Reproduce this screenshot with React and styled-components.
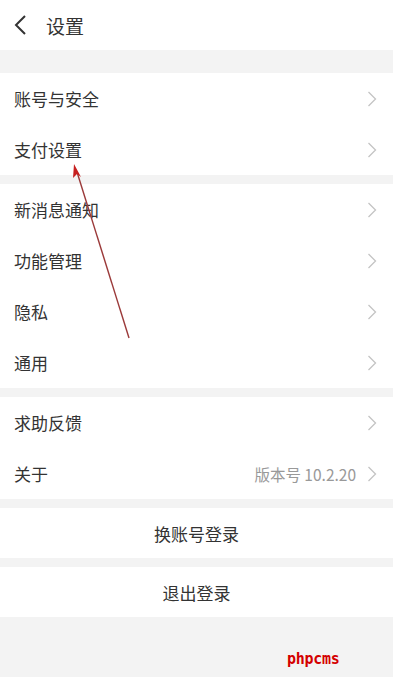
import React from 'react';
import styled, { createGlobalStyle } from 'styled-components';

const GlobalStyle = createGlobalStyle`
  html, body {
    margin: 0;
    padding: 0;
    background: #f3f3f3;
  }
  body {
    font-family: "Noto Sans CJK SC", "Noto Sans", sans-serif;
  }
`;

const Page = styled.div`
  position: relative;
  width: 393px;
  min-height: 677px;
  background: #f3f3f3;
  overflow: hidden;
`;

const Header = styled.div`
  display: flex;
  align-items: center;
  height: 50px;
  background: #fff;
  padding-left: 12px;
  gap: 18px;
`;

const Title = styled.div`
  font-size: 19px;
  color: #333;
  line-height: 1;
`;

const Group = styled.div`
  background: #fff;
  margin-top: ${(p) => p.$gap}px;
`;

const Row = styled.div`
  display: flex;
  align-items: center;
  height: 51px;
  padding: 0 16px 0 14px;
`;

const Label = styled.div`
  flex: 1;
  font-size: 17px;
  color: #333;
`;

const Extra = styled.div`
  font-size: 15.5px;
  color: #999;
  margin-right: 11px;
`;

const Action = styled.div`
  display: flex;
  align-items: center;
  justify-content: center;
  height: 50px;
  background: #fff;
  margin-top: 9px;
  font-size: 17px;
  color: #333;
`;

const Watermark = styled.div`
  position: absolute;
  left: 287px;
  top: 650px;
  font-family: "DejaVu Sans Mono", monospace;
  font-weight: bold;
  font-size: 15px;
  color: #d40000;
  letter-spacing: -0.3px;
`;

const Overlay = styled.svg`
  position: absolute;
  left: 0;
  top: 0;
  pointer-events: none;
`;

const Chevron = () => (
  <svg width="10" height="18" viewBox="0 0 10 18">
    <path d="M1.5 2 L8.5 9 L1.5 16" fill="none" stroke="#c4c4c4" strokeWidth="1.3" />
  </svg>
);

const Back = () => (
  <svg width="16" height="22" viewBox="0 0 16 22">
    <path d="M13 2 L4 11 L13 20" fill="none" stroke="#333" strokeWidth="2" />
  </svg>
);

const groups = [
  { gap: 23, items: [{ label: '账号与安全' }, { label: '支付设置' }] },
  {
    gap: 9,
    items: [
      { label: '新消息通知' },
      { label: '功能管理' },
      { label: '隐私' },
      { label: '通用' },
    ],
  },
  { gap: 9, items: [{ label: '求助反馈' }, { label: '关于', extra: '版本号 10.2.20' }] },
];

export default function App() {
  return (
    <Page>
      <GlobalStyle />
      <Header>
        <Back />
        <Title>设置</Title>
      </Header>
      {groups.map((g, i) => (
        <Group key={i} $gap={g.gap}>
          {g.items.map((it) => (
            <Row key={it.label}>
              <Label>{it.label}</Label>
              {it.extra && <Extra>{it.extra}</Extra>}
              <Chevron />
            </Row>
          ))}
        </Group>
      ))}
      <Action>换账号登录</Action>
      <Action>退出登录</Action>
      <Watermark>phpcms</Watermark>
      <Overlay width="393" height="677" viewBox="0 0 393 677">
        <line x1="129" y1="338" x2="77" y2="172" stroke="#9b3a3a" strokeWidth="1.4" />
        <path d="M74 164 L81 177 L77 174 L73 178 Z" fill="#c62020" />
      </Overlay>
    </Page>
  );
}
